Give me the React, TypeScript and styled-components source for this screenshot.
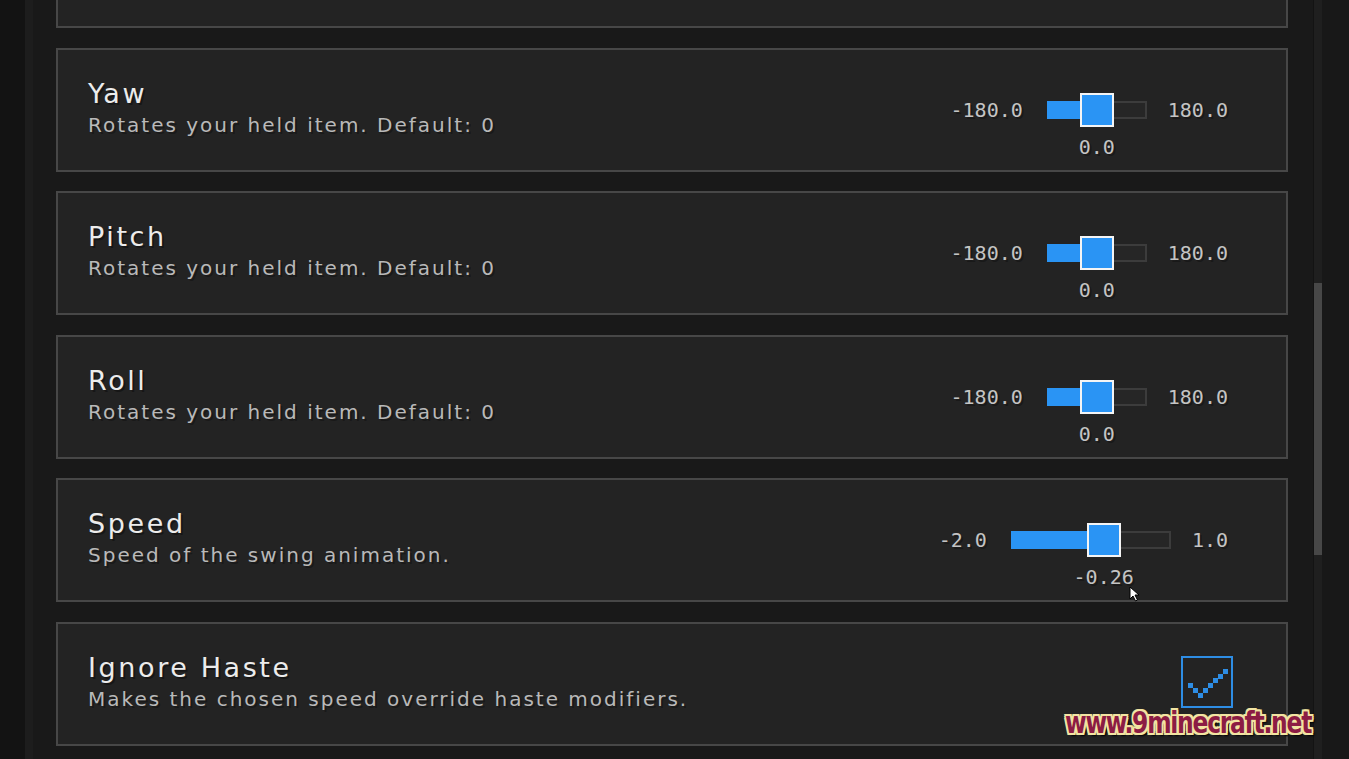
import React from "react";
import styled, { createGlobalStyle } from "styled-components";

const GlobalStyle = createGlobalStyle`
  html, body {
    margin: 0;
    padding: 0;
    background: #131313;
    overflow: hidden;
  }
  * {
    box-sizing: border-box;
  }
`;

const Screen = styled.div`
  position: relative;
  width: 1349px;
  height: 759px;
  display: flex;
  overflow: hidden;
  background: #131313;
  font-family: "DejaVu Sans", "Liberation Sans", sans-serif;
`;

const Gutter = styled.div`
  width: 25px;
  flex: none;
  background: #131313;
`;

const Panel = styled.div`
  width: 1288px;
  flex: none;
  display: flex;
  background: #191919;
  border-left: 8px solid #1d1d1d;
`;

const List = styled.div`
  flex: 1;
  display: flex;
  flex-direction: column;
  gap: 19.5px;
  padding: 0 0 0 23px;
  margin-top: -96px;
`;

const Card = styled.div`
  width: 1232px;
  height: 124px;
  flex: none;
  display: flex;
  align-items: center;
  justify-content: space-between;
  padding: 0 58px 0 30px;
  background: #232323;
  border: 2px solid #474747;
`;

const Info = styled.div`
  display: flex;
  flex-direction: column;
  gap: 4px;
  padding-bottom: 4px;
`;

const Title = styled.div`
  color: #ececec;
  font-size: 27px;
  line-height: 30px;
  letter-spacing: 2.6px;
  text-shadow: 2px 2px 0 rgba(0, 0, 0, 0.35);
`;

const Desc = styled.div`
  color: #b9b9b9;
  font-size: 20px;
  line-height: 24px;
  letter-spacing: 2px;
  text-shadow: 2px 2px 0 rgba(0, 0, 0, 0.3);
`;

const SliderRow = styled.div`
  display: flex;
  align-items: center;
`;

const Num = styled.span`
  color: #c4c4c4;
  font-family: "DejaVu Sans Mono", "Liberation Mono", monospace;
  font-size: 20px;
  line-height: 24px;
  text-shadow: 2px 2px 0 rgba(0, 0, 0, 0.3);
`;

const MinLabel = styled(Num)`
  margin-right: 24px;
`;

const MaxLabel = styled(Num)`
  margin-left: 21px;
`;

const Track = styled.div<{ $width: number }>`
  position: relative;
  width: ${({ $width }) => $width}px;
  height: 18px;
  background: #262626;
  border: 2px solid #3c3c3c;
`;

const Fill = styled.div`
  position: absolute;
  left: -2px;
  top: -2px;
  bottom: -2px;
  background: #2a94f4;
`;

const Thumb = styled.div`
  position: absolute;
  top: 50%;
  width: 34px;
  height: 34px;
  transform: translate(-50%, -50%);
  background: #2a94f4;
  border: 2px solid #f4f4f4;
`;

const ValueLabel = styled(Num)`
  position: absolute;
  top: 32px;
  transform: translateX(-50%);
  white-space: nowrap;
`;

const CheckBox = styled.div`
  width: 52px;
  height: 52px;
  margin-right: -5px;
  margin-bottom: 4px;
  border: 2px solid #2e8de4;
  display: flex;
  align-items: center;
  justify-content: center;
`;

const Scrollbar = styled.div`
  width: 8px;
  flex: none;
  margin-left: 1px;
  background: #1f1f1f;
  display: flex;
  flex-direction: column;
  padding-top: 283px;
`;

const ScrollThumb = styled.div`
  height: 272px;
  background: #474747;
`;

const RightEdge = styled.div`
  flex: 1;
  background: #181818;
`;

const Watermark = styled.div`
  position: absolute;
  left: 1065px;
  top: 704px;
  font-family: "DejaVu Sans Condensed", "DejaVu Sans", sans-serif;
  font-weight: bold;
  font-size: 31px;
  letter-spacing: -1.5px;
  color: #8c1c44;
  transform: scaleX(0.84);
  transform-origin: left center;
  text-shadow: -2px -2px 0 #f2e4a2, 2px -2px 0 #f2e4a2, -2px 2px 0 #f2e4a2,
    2px 2px 0 #f2e4a2, 0 -2px 0 #f2e4a2, 0 2px 0 #f2e4a2, -2px 0 0 #f2e4a2,
    2px 0 0 #f2e4a2, 3px 3px 2px #000;
`;

const Cursor = styled.svg`
  position: absolute;
  left: 1129px;
  top: 586px;
`;

type SliderProps = {
  min: number;
  max: number;
  value: number;
  width: number;
  digits: number;
};

const Slider: React.FC<SliderProps> = ({ min, max, value, width, digits }) => {
  const pos = ((value - min) / (max - min)) * width;
  return (
    <SliderRow>
      <MinLabel>{min.toFixed(1)}</MinLabel>
      <Track $width={width}>
        <Fill style={{ width: pos }} />
        <Thumb style={{ left: pos - 2 }} />
        <ValueLabel style={{ left: pos - 2 }}>{value.toFixed(digits)}</ValueLabel>
      </Track>
      <MaxLabel>{max.toFixed(1)}</MaxLabel>
    </SliderRow>
  );
};

const PixelCheck = () => {
  const pts = [
    [7, 27],
    [12, 32],
    [17, 37],
    [22, 32],
    [27, 27],
    [32, 22],
    [37, 18],
    [42, 13],
  ];
  return (
    <svg width="48" height="48" viewBox="0 0 48 48" style={{ margin: -2 }}>
      {pts.map(([x, y]) => (
        <rect key={`${x}-${y}`} x={x - 2} y={y - 2} width="5" height="5" fill="#2e8de4" />
      ))}
    </svg>
  );
};

const rotate = "Rotates your held item. Default: 0";

export default function App() {
  return (
    <>
      <GlobalStyle />
      <Screen>
        <Gutter />
        <Panel>
          <List>
            <Card />
            <Card>
              <Info>
                <Title>Yaw</Title>
                <Desc>{rotate}</Desc>
              </Info>
              <Slider min={-180} max={180} value={0} width={100} digits={1} />
            </Card>
            <Card>
              <Info>
                <Title>Pitch</Title>
                <Desc>{rotate}</Desc>
              </Info>
              <Slider min={-180} max={180} value={0} width={100} digits={1} />
            </Card>
            <Card>
              <Info>
                <Title>Roll</Title>
                <Desc>{rotate}</Desc>
              </Info>
              <Slider min={-180} max={180} value={0} width={100} digits={1} />
            </Card>
            <Card>
              <Info>
                <Title>Speed</Title>
                <Desc>Speed of the swing animation.</Desc>
              </Info>
              <Slider min={-2} max={1} value={-0.26} width={160} digits={2} />
            </Card>
            <Card>
              <Info>
                <Title>Ignore Haste</Title>
                <Desc>Makes the chosen speed override haste modifiers.</Desc>
              </Info>
              <CheckBox>
                <PixelCheck />
              </CheckBox>
            </Card>
          </List>
        </Panel>
        <Scrollbar>
          <ScrollThumb />
        </Scrollbar>
        <RightEdge />
        <Watermark>www.9minecraft.net</Watermark>
        <Cursor width="12" height="17" viewBox="0 0 12 17">
          <path d="M1 1 L1 13 L4 10 L6.5 15 L8.5 14 L6 9 L10 9 Z" fill="#fff" stroke="#000" strokeWidth="1" />
        </Cursor>
      </Screen>
    </>
  );
}
